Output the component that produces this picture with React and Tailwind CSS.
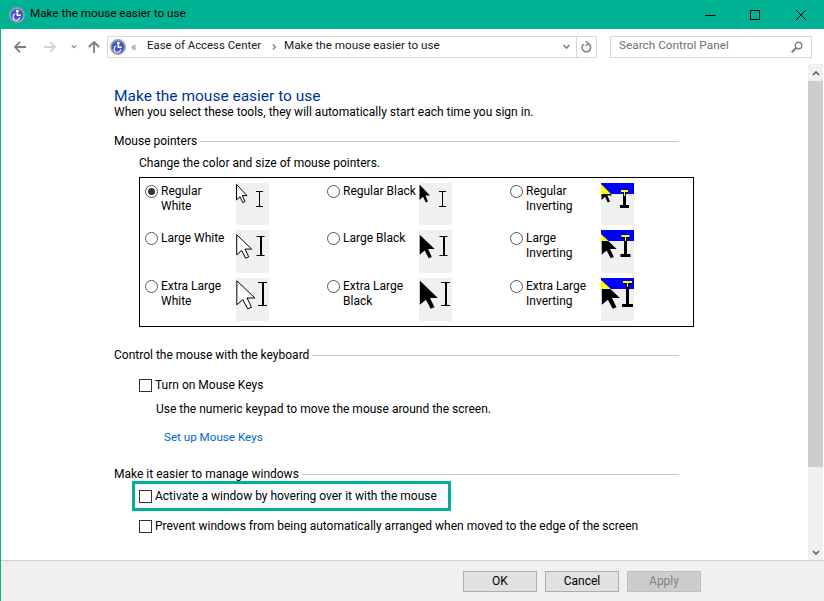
import React from 'react';

const ARROW = 'M0.5 0.5 L0.5 16 L4 12.7 L6.8 18.6 L9 17.6 L6.4 11.6 L11 11.6 Z';

// size config for the three pointer schemes
const sizes = {
  regular: { sx: 1, sy: 1, top: 1, beam: { x: 23, y: 8, h: 16, w: 7, stem: 1 } },
  large: { sx: 1.42, sy: 1.3, top: 4, beam: { x: 24, y: 6, h: 20, w: 8, stem: 2 } },
  xl: { sx: 1.72, sy: 1.55, top: 2, beam: { x: 26, y: 4, h: 24, w: 9, stem: 2 } },
};

const PointerTile = ({ size, variant }) => {
  const s = sizes[size];
  const { x, y, h, w, stem } = s.beam;
  const tileH = size === 'regular' ? 42 : 43;
  const inverting = variant === 'inverting';
  const white = variant === 'white';
  const left = x - w / 2 + 0.5;
  return (
    <svg width="33" height={tileH} className="block shrink-0">
      <rect width="33" height={tileH} fill="#f0f0f0" />
      {inverting && <rect width="33" height="11" fill="#0000ff" />}
      <g transform={`translate(0 ${s.top}) scale(${s.sx} ${s.sy})`}>
        <path d={ARROW} fill={white ? '#fff' : '#000'} stroke={white ? '#000' : 'none'} strokeWidth="1" vectorEffect="non-scaling-stroke" />
      </g>
      {inverting && <polygon points={`0,${s.top} 0,11 ${((11 - s.top) * s.sx) / s.sy},11`} fill="#ffff00" />}
      {inverting ? (
        <g>
          <rect x={x - 1} y={y} width="3" height={h + 1} fill="#000" />
          <rect x={left} y={y - 1} width={w} height="2" fill="#ffff00" />
          <rect x={left} y={y + 1} width={w} height="1" fill="#000" />
          <rect x={x} y={y + 1} width="1" height="4" fill="#ffff00" />
          <rect x={left - 1} y={y + h - 2} width={w + 2} height="3" fill="#000" />
        </g>
      ) : (
        <g fill="#000">
          <rect x={x} y={y} width={stem} height={h} />
          <rect x={left} y={y} width={w} height="1" />
          <rect x={left} y={y + h - 1} width={w} height="1" />
        </g>
      )}
    </svg>
  );
};

const pointers = [
  { label: ['Regular', 'White'], size: 'regular', variant: 'white', checked: true },
  { label: ['Regular Black'], size: 'regular', variant: 'black' },
  { label: ['Regular', 'Inverting'], size: 'regular', variant: 'inverting' },
  { label: ['Large White'], size: 'large', variant: 'white' },
  { label: ['Large Black'], size: 'large', variant: 'black' },
  { label: ['Large', 'Inverting'], size: 'large', variant: 'inverting' },
  { label: ['Extra Large', 'White'], size: 'xl', variant: 'white' },
  { label: ['Extra Large', 'Black'], size: 'xl', variant: 'black' },
  { label: ['Extra Large', 'Inverting'], size: 'xl', variant: 'inverting' },
];

const AccessIcon = () => (
  <svg width="16" height="16" viewBox="0 0 16 16" className="block">
    <circle cx="8" cy="8" r="7" fill="#3f56c8" stroke="#9a9aa8" strokeWidth="1.8" />
    <circle cx="8.3" cy="4.2" r="1.4" fill="#fff" />
    <path d="M7.5 5.5 L9 5.5 L9 7.6 L11.8 7.6 L11.8 9 L7.5 9 Z" fill="#fff" />
    <path d="M6 6.8 A3.4 3.4 0 1 0 10.8 10.4" fill="none" stroke="#fff" strokeWidth="1.1" />
  </svg>
);

const Radio = ({ checked }) => (
  <span className="w-[13px] h-[13px] rounded-full border border-[#555] bg-white flex items-center justify-center shrink-0 mt-[2px]">
    {checked && <span className="w-[7px] h-[7px] rounded-full bg-[#333]" />}
  </span>
);

const Checkbox = () => <span className="w-[13px] h-[13px] border border-[#333] bg-white shrink-0" />;

const SectionHeader = ({ children, className }) => (
  <div className={`flex items-center h-4 w-[565px] ${className}`}>
    <span className="whitespace-nowrap pr-[3px]">{children}</span>
    <span className="flex-1 h-px bg-[#c8c8c8]" />
  </div>
);

const CheckRow = ({ children }) => (
  <div className="flex items-center h-4 leading-4 gap-[3px] whitespace-nowrap">
    <Checkbox />
    <span>{children}</span>
  </div>
);

const Chevron = ({ width = 8, color = '#808080' }) => (
  <svg width={width} height="6" viewBox="0 0 8 6" className="block">
    <path d="M1 1 L4 4 L7 1" fill="none" stroke={color} strokeWidth="1.6" />
  </svg>
);

const NavArrow = ({ color, rotate }) => (
  <svg width="12" height="12" viewBox="0 0 12 12" className={`block ${rotate}`}>
    <path d="M6 0.8 L1 6 L6 11.2 M1 6 L12 6" fill="none" stroke={color} strokeWidth="1.8" />
  </svg>
);

const Button = ({ children, disabled }) => (
  <button className={`w-[74px] h-[21px] border text-center leading-[19px] ${disabled ? 'bg-[#cccccc] border-[#bfbfbf] text-[#838383]' : 'bg-[#e1e1e1] border-[#adadad] text-black'}`}>
    {children}
  </button>
);

export default function App() {
  return (
    <div className="w-[824px] h-[601px] flex flex-col overflow-hidden bg-white text-black text-[12px] font-['Roboto',sans-serif] border-l border-[#00b294]">
      {/* title bar */}
      <div className="h-[29px] shrink-0 -ml-px bg-[#00b294] flex items-center pl-[9px]">
        <AccessIcon />
        <span className="ml-[5px] flex-1 text-[11.7px] -mt-px">Make the mouse easier to use</span>
        <svg width="110" height="12" viewBox="0 0 110 12" className="mr-[9px] block">
          <path d="M0 6.5 H10.5" stroke="#000" fill="none" />
          <rect x="45.5" y="1.5" width="9" height="9" stroke="#000" fill="none" />
          <path d="M91 1 L101 11 M101 1 L91 11" stroke="#000" fill="none" />
        </svg>
      </div>

      {/* address toolbar */}
      <div className="h-[35px] shrink-0 flex items-center">
        <span className="ml-[13px]"><NavArrow color="#7d7d7d" /></span>
        <span className="ml-[18px]"><NavArrow color="#d2d2d2" rotate="rotate-180" /></span>
        <span className="ml-[15px]"><Chevron width={6} color="#8a8a8a" /></span>
        <span className="ml-[11px]"><NavArrow color="#7d7d7d" rotate="rotate-90" /></span>
        <div className="ml-[7px] w-[490px] h-[22px] border border-[#d9d9d9] flex items-center">
          <span className="ml-[2px]"><AccessIcon /></span>
          <span className="ml-[5px] text-[#808080] w-[11px]">«</span>
          <span className="ml-[5px] text-[#1a1a1a] text-[11.4px] -mt-[2px] whitespace-nowrap">Ease of Access Center</span>
          <span className="ml-[10px]"><span className="block -rotate-90"><Chevron width={7} /></span></span>
          <span className="ml-[6px] text-[#1a1a1a] text-[11.7px] -mt-[2px] whitespace-nowrap">Make the mouse easier to use</span>
          <span className="ml-auto mr-[5px]"><Chevron width={9} /></span>
          <span className="w-[20px] h-full border-l border-[#d9d9d9] flex items-center justify-center">
            <svg width="11" height="12" viewBox="0 0 11 12" className="block">
              <path d="M3 3 A4.3 4.3 0 1 0 7 2.6" fill="none" stroke="#808080" strokeWidth="1.5" />
              <path d="M4.5 0 L7.8 2.6 L4.5 5" fill="none" stroke="#808080" strokeWidth="1.3" />
            </svg>
          </span>
        </div>
        <div className="ml-[13px] w-[202px] h-[22px] border border-[#d9d9d9] flex items-center pl-[8px] pr-[8px] text-[#707070]">
          <span className="flex-1 text-[11.8px] -mt-px">Search Control Panel</span>
          <svg width="12" height="12" viewBox="0 0 12 12" className="block">
            <circle cx="7.5" cy="4.5" r="3.3" fill="none" stroke="#808080" strokeWidth="1.4" />
            <path d="M5 7 L0.8 11.2" stroke="#808080" strokeWidth="2" />
          </svg>
        </div>
      </div>

      <div className="flex-1 min-h-0 flex">
        {/* content */}
        <main className="flex-1 pl-[113px] pt-[22px]">
          <h1 className="h-[18px] leading-[20px] text-[15.5px] text-[#003399]">Make the mouse easier to use</h1>
          <p className="h-4 leading-4">When you select these tools, they will automatically start each time you sign in.</p>

          <SectionHeader className="mt-[13px]">Mouse pointers</SectionHeader>
          <p className="mt-[6px] ml-[25px] h-4 leading-4">Change the color and size of mouse pointers.</p>

          <div className="mt-[6px] ml-[25px] w-[555px] h-[150px] border border-black pt-[5px] pl-[5px] grid grid-cols-[182px_183px_1fr] grid-rows-[47px_48px_43px]">
            {pointers.map((p) => (
              <div key={p.label.join(' ')} className="flex items-start">
                <Radio checked={p.checked} />
                <div className={`ml-[3px] pt-px leading-[15px] whitespace-nowrap ${p.variant === 'black' ? 'w-[76px]' : 'w-[75px]'}`}>
                  {p.label.map((line) => <div key={line}>{line}</div>)}
                </div>
                <PointerTile size={p.size} variant={p.variant} />
              </div>
            ))}
          </div>

          <SectionHeader className="mt-[20px]">Control the mouse with the keyboard</SectionHeader>
          <div className="mt-[14px] ml-[25px]"><CheckRow>Turn on Mouse Keys</CheckRow></div>
          <p className="mt-[8px] ml-[42px] h-4 leading-4">Use the numeric keypad to move the mouse around the screen.</p>
          <p className="mt-[12px] ml-[50px] h-4 leading-4 text-[11.65px] text-[#0066cc]">Set up Mouse Keys</p>

          <SectionHeader className="mt-[21px]">Make it easier to manage windows</SectionHeader>
          <div className="-mt-px ml-[18px] w-[319px] h-[30px] border-[3px] border-[#00b294] pl-[4px] flex items-center">
            <CheckRow>Activate a window by hovering over it with the mouse</CheckRow>
          </div>
          <div className="mt-[7px] ml-[25px]"><CheckRow>Prevent windows from being automatically arranged when moved to the edge of the screen</CheckRow></div>
        </main>

        {/* scrollbar */}
        <div className="w-[16px] shrink-0 bg-[#f0f0f0] border-r border-white flex flex-col items-center">
          <div className="h-[17px] flex items-center justify-center"><span className="block rotate-180"><Chevron width={8} color="#606060" /></span></div>
          <div className="w-full h-[386px] bg-[#cdcdcd]" />
          <div className="mt-auto h-[15px] flex items-center justify-center"><Chevron width={8} color="#606060" /></div>
        </div>
      </div>

      {/* footer buttons */}
      <div className="h-[41px] shrink-0 bg-[#f0f0f0] border-t border-[#d0d0d0] flex items-center pl-[462px] gap-[8px]">
        <Button>OK</Button>
        <Button>Cancel</Button>
        <Button disabled>Apply</Button>
      </div>
    </div>
  );
}
